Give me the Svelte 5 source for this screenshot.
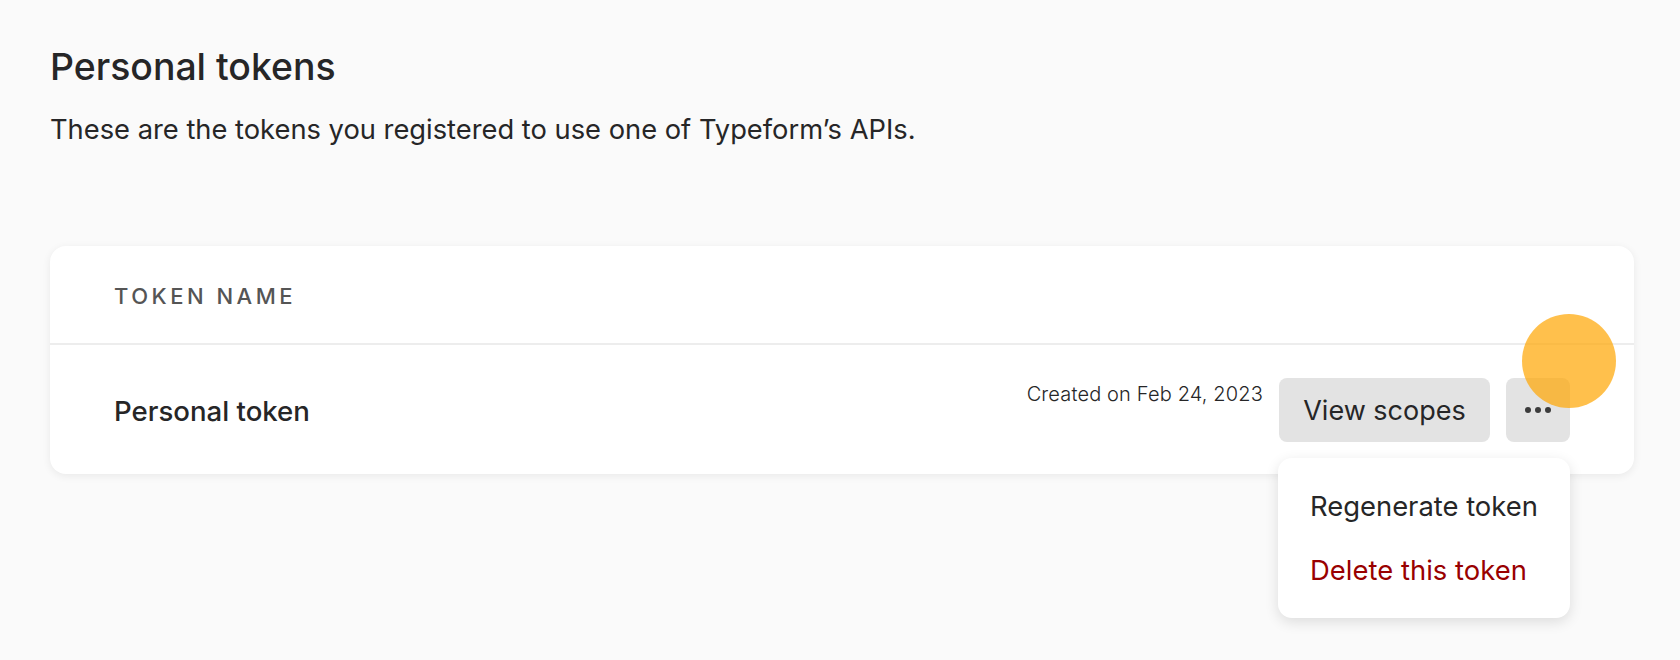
<script lang="ts">
  const tokens = [{ name: 'Personal token', created: 'Feb 24, 2023' }];
</script>

<main class="page">
  <h1>Personal tokens</h1>
  <p class="intro">These are the tokens you registered to use one of Typeform’s APIs.</p>

  <section class="card">
    <div class="card-head">TOKEN NAME</div>
    {#each tokens as token}
      <div class="row">
        <span class="name">{token.name}</span>
        <div class="actions">
          <span class="created">Created on {token.created}</span>
          <button class="btn scopes">View scopes</button>
          <div class="more-wrap">
            <button class="btn more" aria-label="More">
              <svg width="26" height="6" viewBox="0 0 26 6" fill="#3c3c3c">
                <circle cx="3" cy="3" r="3" />
                <circle cx="13" cy="3" r="3" />
                <circle cx="23" cy="3" r="3" />
              </svg>
            </button>
            <div class="menu">
              <button class="menu-item">Regenerate token</button>
              <button class="menu-item danger">Delete this token</button>
            </div>
            <span class="cursor"></span>
          </div>
        </div>
      </div>
    {/each}
  </section>
</main>

<style>
  :global(body) {
    margin: 0;
    background: #fafafa;
    font-family: Inter, 'Liberation Sans', sans-serif;
    color: #262627;
  }

  .page {
    min-height: 660px;
    box-sizing: border-box;
    padding: 44px 46px 0 50px;
  }

  h1 {
    margin: 0;
    font-size: 37.4px;
    line-height: 46px;
    font-weight: 500;
  }

  .intro {
    margin: 20px 0 0;
    font-size: 27.3px;
    line-height: 40px;
    font-weight: 400;
  }

  .card {
    margin-top: 96px;
    background: #fff;
    border-radius: 16px;
    box-shadow: 0 2px 8px rgba(0, 0, 0, 0.07);
  }

  .card-head {
    height: 99px;
    box-sizing: border-box;
    padding: 35px 64px 0 64px;
    font-size: 22px;
    line-height: 30px;
    letter-spacing: 3.5px;
    font-weight: 500;
    color: #555;
    border-bottom: 2px solid #ededed;
  }

  .row {
    display: flex;
    align-items: center;
    justify-content: space-between;
    height: 129px;
    padding: 0 64px;
  }

  .name {
    padding-top: 2px;
    font-size: 27.6px;
    font-weight: 500;
  }

  .actions {
    display: flex;
    gap: 16px;
  }

  .created {
    font-size: 20px;
    line-height: 28px;
    font-weight: 300;
    letter-spacing: 0.15px;
    margin-top: 2px;
  }

  .btn {
    height: 64px;
    border: none;
    border-radius: 8px;
    background: #e3e3e3;
    color: #262627;
    font-family: inherit;
    font-size: 27px;
    padding: 0;
    display: flex;
    align-items: center;
    justify-content: center;
  }

  .scopes {
    width: 211px;
    padding-top: 2px;
  }

  .more {
    width: 64px;
  }

  .more-wrap {
    position: relative;
  }

  .menu {
    position: absolute;
    top: 80px;
    right: 0;
    width: 292px;
    box-sizing: border-box;
    padding: 16px 0;
    background: #fff;
    border-radius: 14px;
    box-shadow: 0 4px 14px rgba(0, 0, 0, 0.12);
  }

  .menu-item {
    display: block;
    width: 100%;
    height: 64px;
    padding: 0 0 0 32px;
    border: none;
    background: none;
    text-align: left;
    font-family: inherit;
    font-size: 27.4px;
    color: #262627;
  }

  .danger {
    color: #990000;
    letter-spacing: 0.03px;
  }

  .cursor {
    position: absolute;
    top: -64px;
    left: 16px;
    width: 94px;
    height: 94px;
    border-radius: 50%;
    background: rgba(255, 165, 0, 0.7);
  }
</style>
